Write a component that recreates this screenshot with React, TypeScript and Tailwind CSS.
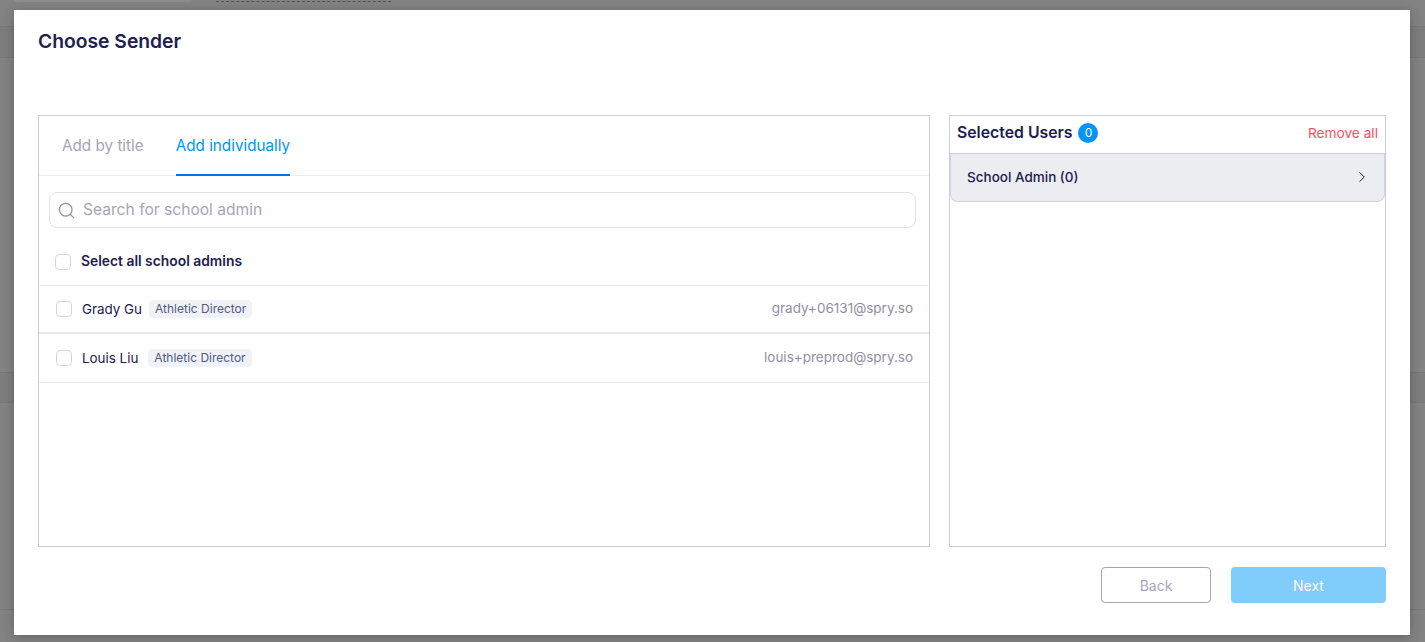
import { ChevronRight, Search } from "lucide-react";

const users = [
  { name: "Grady Gu", title: "Athletic Director", email: "grady+06131@spry.so" },
  { name: "Louis Liu", title: "Athletic Director", email: "louis+preprod@spry.so" },
];

function Checkbox() {
  return <span className="block h-4 w-4 shrink-0 rounded-[4px] border border-[#d5d5dc] bg-white" />;
}

// dimmed page that sits behind the modal
function Backdrop() {
  return (
    <div className="flex h-full flex-col bg-[#838383]">
      <div className="relative h-[27px] shrink-0 border-b border-[#777777]">
        <div className="absolute left-[14px] top-0 h-[2px] w-[178px] rounded-b bg-[#8c8c8c]" />
        <div className="absolute left-[216px] top-0 h-[2px] w-[175px] border-b border-dashed border-[#555555]" />
      </div>
      <div className="h-[31px] shrink-0 border-b border-[#777777] bg-[#7d7d7d]" />
      <div className="h-[315px] shrink-0 border-b border-[#777777]" />
      <div className="h-[30px] shrink-0 border-b border-[#777777] bg-[#7d7d7d]" />
      <div className="h-[207px] shrink-0 border-b border-[#777777]" />
    </div>
  );
}

export default function App() {
  return (
    <div className="relative h-[642px] w-[1425px] overflow-hidden font-['Inter',sans-serif]">
      <Backdrop />
      <div className="absolute left-[14px] top-[10px] flex h-[625px] w-[1396px] flex-col bg-white px-6 shadow-[0_2px_10px_rgba(0,0,0,0.25)]">
        <h1 className="mt-[18px] text-[19.3px] leading-[26px] font-semibold text-[#20204f]">Choose Sender</h1>

        <div className="mt-[61px] flex h-[432px] gap-[19px]">
          {/* Left panel */}
          <div className="flex w-[892px] flex-col border border-[#cdcddc]">
            <div className="flex h-[60px] gap-8 border-b border-[#ececf0] pl-[23px] text-[15.25px]">
              <span className="flex items-center pt-[2px] text-[#a5a5ba]">Add by title</span>
              <span className="flex h-[60px] items-center border-b-2 border-[#0073f0] pt-[2px] text-[#0095f5]">Add individually</span>
            </div>
            <div className="ml-[10px] mr-[13px] mt-4 flex h-9 items-center gap-[7px] rounded-lg border border-[#e2e2e8] pl-[7px]">
              <Search size={19} strokeWidth={1.6} className="text-[#8f8fa3]" />
              <span className="text-[15.6px] text-[#a5a5ba]">Search for school admin</span>
            </div>
            <div className="mt-[13px] flex h-[45px] items-center gap-[10px] border-b border-[#ececf0] pb-[3px] pl-4">
              <Checkbox />
              <span className="text-[13.85px] font-semibold text-[#20204f]">Select all school admins</span>
            </div>
            {users.map((u, i) => (
              <div
                key={u.name}
                className={`flex items-center border-b border-[#e8e8ec] pl-[17px] pr-4 ${i === 0 ? "h-[48px] border-b-2" : "h-[49px]"}`}
              >
                <Checkbox />
                <span className="ml-[10px] text-[13.4px] text-[#20204f]">{u.name}</span>
                <span className={`rounded bg-[#eff3f7] px-[6px] py-[1px] text-[12px] leading-[16px] text-[#56597f] ${i === 0 ? "ml-[7px]" : "ml-[10px]"}`}>{u.title}</span>
                <span className="ml-auto pb-[1px] text-[13.5px] text-[#8f8fa3]">{u.email}</span>
              </div>
            ))}
          </div>

          {/* Right panel */}
          <div className="flex w-[437px] flex-col border border-[#cdcddc]">
            <div className="flex h-[38px] items-center border-b border-[#cdcddc] pb-[3px] pl-[7px] pr-[7px]">
              <span className="text-[15.8px] font-semibold text-[#20204f]">Selected Users</span>
              <span className="ml-[6px] flex h-5 w-5 items-center justify-center rounded-full bg-[#0095f5] text-[12px] text-white">0</span>
              <span className="ml-auto text-[13.7px] text-[#f9505f]">Remove all</span>
            </div>
            <div className="flex h-[48px] items-center justify-between rounded-b-lg border-x border-b border-[#d3d3dd] bg-[#ecedf1] pb-[1px] pl-4 pr-[13px]">
              <span className="text-[13.5px] font-medium text-[#20204f]">School Admin (0)</span>
              <ChevronRight size={18} strokeWidth={1.3} className="text-[#20204f]" />
            </div>
          </div>
        </div>

        <div className="mt-5 flex justify-end gap-5">
          <button className="h-9 w-[110px] rounded border border-[#a5a5ba] text-[14px] text-[#a5a5ba]">Back</button>
          <button className="h-9 w-[155px] rounded bg-[#80ccfa] text-[14px] text-white">Next</button>
        </div>
      </div>
    </div>
  );
}
